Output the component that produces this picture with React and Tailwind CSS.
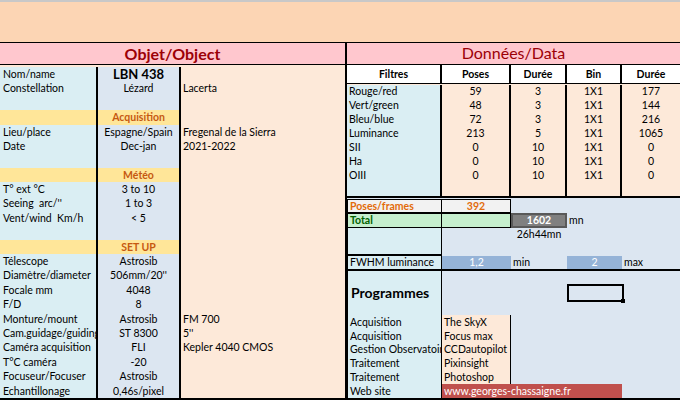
import React from 'react';

const RH = 'h-[13.9px]';
const LH = 'h-[14.4px]';
const left = [
  ['Nom/name', 'LBN 438', '', 'big'],
  ['Constellation', 'Lézard', 'Lacerta'],
  ['', '', ''],
  ['', 'Acquisition', '', 'y'],
  ['Lieu/place', 'Espagne/Spain', 'Fregenal de la Sierra'],
  ['Date', 'Dec-jan', '2021-2022'],
  ['', '', ''],
  ['', 'Météo', '', 'y'],
  ['T° ext °C', '3 to 10', ''],
  ["Seeing  arc/''", '1 to 3', ''],
  ['Vent/wind  Km/h', '< 5', ''],
  ['', '', ''],
  ['', 'SET UP', '', 'y'],
  ['Télescope', 'Astrosib', ''],
  ['Diamètre/diameter', "506mm/20''", ''],
  ['Focale mm', '4048', ''],
  ['F/D', '8', ''],
  ['Monture/mount', 'Astrosib', 'FM 700'],
  ['Cam.guidage/guiding', 'ST 8300', "5''"],
  ['Caméra acquisition', 'FLI', 'Kepler 4040 CMOS'],
  ['T°C caméra', '-20', ''],
  ['Focuseur/Focuser', 'Astrosib', ''],
  ['Echantillonage', '0,46s/pixel', ''],
];

const data = [
  ['Rouge/red', '59', '3', '1X1', '177'],
  ['Vert/green', '48', '3', '1X1', '144'],
  ['Bleu/blue', '72', '3', '1X1', '216'],
  ['Luminance', '213', '5', '1X1', '1065'],
  ['SII', '0', '10', '1X1', '0'],
  ['Ha', '0', '10', '1X1', '0'],
  ['OIII', '0', '10', '1X1', '0'],
  ['', '', '', '', ''],
];

const progs = [
  ['Acquisition', 'The SkyX'],
  ['Acquisition', 'Focus max'],
  ['Gestion Observatoire', 'CCDautopilot'],
  ['Traitement', 'Pixinsight'],
  ['Traitement', 'Photoshop'],
];

function Left() {
  return (
    <div className="w-[347px] border-r-2 border-black flex flex-col">
      <div className="h-[23px] bg-[#ffc7ce] border-y border-black flex items-center justify-center text-[16px] font-bold text-[#9c0006]">
        Objet/Object
      </div>
      <div className="flex bg-[#fde9d9] pt-[2px] flex-1">
        <div className="w-[96px] bg-[#daeef3]">
          {left.map((r, i) => (
            <div key={i} className={`${LH} pl-[3px] whitespace-pre flex items-center ${r[3] === 'y' ? 'bg-[#ffe699]' : ''}`}>{r[0]}</div>
          ))}
        </div>
        <div className="w-[85px] bg-[#dce6f1] border-x-2 border-black">
          {left.map((r, i) => (
            <div key={i} className={`${LH} flex items-center justify-center whitespace-nowrap ${r[3] === 'y' ? 'bg-[#ffe699] text-[#c65911] font-bold' : ''} ${r[3] === 'big' ? 'text-[13px] font-bold' : ''}`}>{r[1]}</div>
          ))}
        </div>
        <div className="flex-1">
          {left.map((r, i) => (
            <div key={i} className={`${LH} pl-[2px] flex items-center whitespace-nowrap`}>{r[2]}</div>
          ))}
        </div>
      </div>
    </div>
  );
}

function Right() {
  const w = ['w-[95px]', 'w-[69px]', 'w-[56px]', 'w-[55px]', 'flex-1'];
  return (
    <div className="flex-1 flex flex-col bg-[#dce6f1]">
      <div className="h-[23px] bg-[#ffc7ce] border-y border-black flex items-center justify-center text-[16px] text-[#9c0006]">
        Données/Data
      </div>
      <div className="flex h-[19px] bg-white border-b border-black font-bold">
        {['Filtres', 'Poses', 'Durée', 'Bin', 'Durée'].map((h, i) => (
          <div key={i} className={`${w[i]} flex items-center justify-center ${i < 4 ? 'border-r-2 border-black' : ''}`}>{h}</div>
        ))}
      </div>
      <div className="border-b-2 border-black pt-[1px] bg-[#fde9d9]">
        {data.map((r, j) => (
          <div key={j} className={`flex ${RH}`}>
            {r.map((c, i) => (
              <div key={i} className={`${w[i]} flex items-center ${i === 0 ? 'bg-[#daeef3] pl-[2px]' : 'bg-[#fde9d9] justify-center'} ${i < 4 ? 'border-r-2 border-black' : ''}`}>{c}</div>
            ))}
          </div>
        ))}
      </div>
      <div className="flex h-[14px] mt-[1px]">
        <div className="w-[164px] flex border border-black bg-[#f2f2f2] text-[#e26b0a] font-bold">
          <div className="w-[94px] pl-[2px] flex items-center border-r border-black">Poses/frames</div>
          <div className="flex-1 flex items-center justify-center">392</div>
        </div>
      </div>
      <div className="flex h-[15px]">
        <div className="w-[164px] flex bg-[#c6efce] border border-black text-[#006100] font-bold">
          <div className="w-[94px] pl-[2px] flex items-center border-r border-black">Total</div>
        </div>
        <div className="w-[56px] bg-[#808080] border-2 border-[#595959] text-white font-bold flex items-center justify-center">1602</div>
        <div className="pl-[2px] flex items-center">mn</div>
      </div>
      <div className="flex h-[14px]">
        <div className="w-[95px] bg-[#daeef3] border-x border-black"></div>
        <div className="w-[69px]"></div>
        <div className="w-[56px] flex items-center justify-center">26h44mn</div>
      </div>
      <div className="flex h-[14px]">
        <div className="w-[95px] bg-[#daeef3] border-x border-b-2 border-black"></div>
      </div>
      <div className="flex h-[14px]">
        <div className="w-[95px] bg-[#daeef3] border-x border-black pl-[2px] flex items-center">FWHM luminance</div>
        <div className="w-[69px] flex items-center justify-center bg-[#95b3d7] text-white">1,2</div>
        <div className="w-[56px] pl-[2px] flex items-center">min</div>
        <div className="w-[55px] flex items-center justify-center bg-[#95b3d7] text-white">2</div>
        <div className="flex-1 pl-[2px] flex items-center">max</div>
      </div>
      <div className="flex h-[46px] border-t-2 border-black">
        <div className="w-[95px] bg-[#daeef3] border-x border-black pl-[3px] flex items-center text-[14px] font-bold">Programmes</div>
        <div className="w-[125px]"></div>
        <div className="w-[57px] flex items-center">
          <div className="relative w-[57px] h-[18px] border-2 border-black">
            <div className="absolute -right-[3px] -bottom-[3px] w-[4px] h-[4px] bg-black"></div>
          </div>
        </div>
      </div>
      {progs.map((p, i) => (
        <div key={i} className={`flex ${RH}`}>
          <div className="w-[95px] bg-[#daeef3] border-x border-black pl-[2px] flex items-center whitespace-nowrap">{p[0]}</div>
          <div className="w-[69px] bg-[#fde9d9] border-r border-black pl-[2px] flex items-center">{p[1]}</div>
        </div>
      ))}
      <div className={`flex ${RH}`}>
        <div className="w-[95px] bg-[#daeef3] border-x border-black pl-[2px] flex items-center">Web site</div>
        <div className="w-[180px] bg-[#c0504d] text-white pl-[2px] flex items-center">www.georges-chassaigne.fr</div>
      </div>
    </div>
  );
}

export default function App() {
  return (
    <div className="w-[680px] h-[400px] overflow-hidden bg-white text-[10.5px] text-black leading-none" style={{ fontFamily: 'Lato, "Open Sans", sans-serif' }}>
      <div className="h-[42px] bg-[#fcd5b4] border-t-2 border-[#c8c8c8]"></div>
      <div className="flex h-[358px] border-b-2 border-black">
        <Left />
        <Right />
      </div>
    </div>
  );
}
